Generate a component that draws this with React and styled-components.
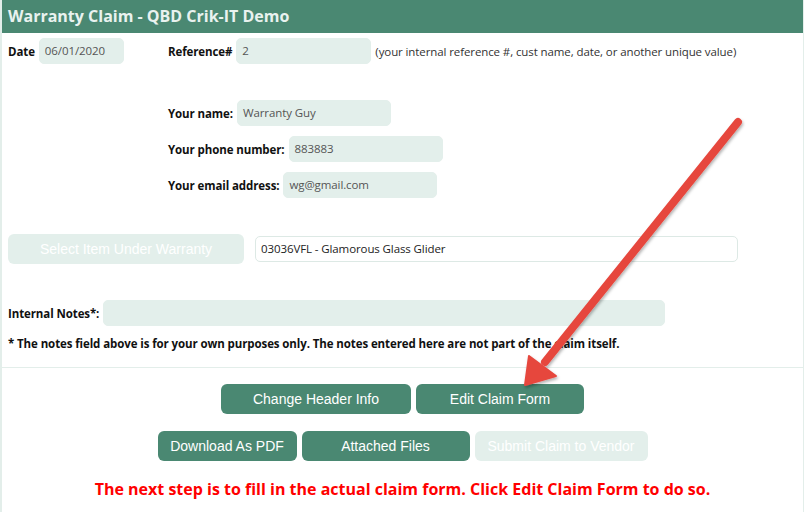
import React from "react";
import styled, { createGlobalStyle } from "styled-components";

const GlobalStyle = createGlobalStyle`
  body {
    margin: 0;
    background: #fff;
    font-family: "Open Sans", "Noto Sans", sans-serif;
    color: #111;
  }
`;

const Page = styled.div`
  position: relative;
  width: 804px;
  height: 512px;
  overflow: hidden;
`;

const Panel = styled.div`
  border-left: 2px solid #e3eeea;
  border-right: 1px solid #e3eeea;
  min-height: 512px;
  box-sizing: border-box;
`;

const Header = styled.div`
  height: 33px;
  background: #4a8872;
  color: #e9f2ef;
  font-size: 16px;
  font-weight: 700;
  line-height: 33px;
  padding-left: 6px;
`;

const Body = styled.div`
  padding: 0 6px;
`;

const Row = styled.div`
  display: flex;
  align-items: center;
  margin-top: ${(p) => p.$top || 0}px;
  gap: ${(p) => p.$gap ?? 4}px;
`;

const Group = styled.div`
  display: flex;
  align-items: center;
  gap: 4px;
  width: ${(p) => (p.$width ? `${p.$width}px` : "auto")};
`;

const Label = styled.span`
  font-size: 11.5px;
  font-weight: 700;
  letter-spacing: -0.1px;
  white-space: nowrap;
`;

const Field = styled.div`
  box-sizing: border-box;
  width: ${(p) => p.$width}px;
  height: 26px;
  border-radius: 5px;
  background: ${(p) => (p.$plain ? "#fff" : "#e3efeb")};
  border: 1px solid ${(p) => (p.$plain ? "#dde9e5" : "#e3efeb")};
  font-size: 11.5px;
  letter-spacing: -0.1px;
  color: ${(p) => (p.$plain ? "#222" : "#555")};
  line-height: 24px;
  padding-left: 5px;
  white-space: nowrap;
`;

const Hint = styled.span`
  font-size: 11.5px;
  letter-spacing: -0.1px;
  color: #333;
`;

const Contact = styled.div`
  display: flex;
  flex-direction: column;
  gap: 10px;
  margin-top: 36px;
  padding-left: 160px;
`;

const Button = styled.button`
  box-sizing: border-box;
  width: ${(p) => p.$width}px;
  height: 30px;
  border: none;
  border-radius: 6px;
  background: ${(p) => (p.$disabled ? "#e3efeb" : "#4a8872")};
  color: #fff;
  font-family: "Liberation Sans", Arial, sans-serif;
  font-size: 14px;
  padding: 0;
`;

const Note = styled.div`
  margin-top: 10px;
  font-size: 11.5px;
  font-weight: 700;
  letter-spacing: -0.1px;
`;

const Divider = styled.div`
  height: 1px;
  background: #e3eeea;
  margin-top: 16px;
`;

const Actions = styled.div`
  display: flex;
  flex-direction: column;
  align-items: center;
  padding-top: 16px;
`;

const ButtonRow = styled.div`
  display: flex;
  gap: 5px;
  margin-top: ${(p) => p.$top || 0}px;
`;

const Alert = styled.div`
  margin-top: 17px;
  color: #ff0000;
  font-size: 16px;
  font-weight: 700;
  text-align: center;
`;

const ArrowLayer = styled.svg`
  position: absolute;
  left: 0;
  top: 0;
  pointer-events: none;
`;

export default function App() {
  return (
    <Page>
      <GlobalStyle />
      <Panel>
        <Header>Warranty Claim - QBD Crik-IT Demo</Header>
        <Body>
          <Row $top={5}>
            <Group $width={156}>
              <Label>Date</Label>
              <Field $width={85}>06/01/2020</Field>
            </Group>
            <Group>
              <Label>Reference#</Label>
              <Field $width={135}>2</Field>
            </Group>
            <Hint>(your internal reference #, cust name, date, or another unique value)</Hint>
          </Row>

          <Contact>
            <Group>
              <Label>Your name:</Label>
              <Field $width={154}>Warranty Guy</Field>
            </Group>
            <Group>
              <Label>Your phone number:</Label>
              <Field $width={154}>883883</Field>
            </Group>
            <Group>
              <Label>Your email address:</Label>
              <Field $width={154}>wg@gmail.com</Field>
            </Group>
          </Contact>

          <Row $top={36} $gap={11}>
            <Button $width={236} $disabled>Select Item Under Warranty</Button>
            <Field $width={483} $plain>03036VFL - Glamorous Glass Glider</Field>
          </Row>

          <Row $top={36}>
            <Label>Internal Notes*:</Label>
            <Field $width={562} />
          </Row>

          <Note>
            * The notes field above is for your own purposes only. The notes entered here are not part of the claim itself.
          </Note>
        </Body>

        <Divider />

        <Actions>
          <ButtonRow>
            <Button $width={190}>Change Header Info</Button>
            <Button $width={168}>Edit Claim Form</Button>
          </ButtonRow>
          <ButtonRow $top={17}>
            <Button $width={139}>Download As PDF</Button>
            <Button $width={168}>Attached Files</Button>
            <Button $width={173} $disabled>Submit Claim to Vendor</Button>
          </ButtonRow>
          <Alert>
            The next step is to fill in the actual claim form. Click Edit Claim Form to do so.
          </Alert>
        </Actions>
      </Panel>

      <ArrowLayer width="804" height="512" viewBox="0 0 804 512">
        <defs>
          <filter id="shadow" x="-20%" y="-20%" width="140%" height="140%">
            <feDropShadow dx="1" dy="2" stdDeviation="1.5" floodColor="#000" floodOpacity="0.3" />
          </filter>
        </defs>
        <g filter="url(#shadow)" fill="#e6473e" stroke="#e6473e">
          <line x1="738" y1="122" x2="545" y2="362" strokeWidth="8" strokeLinecap="round" />
          <polygon points="525,385 529,356 556,376" strokeWidth="2" strokeLinejoin="round" />
        </g>
      </ArrowLayer>
    </Page>
  );
}
